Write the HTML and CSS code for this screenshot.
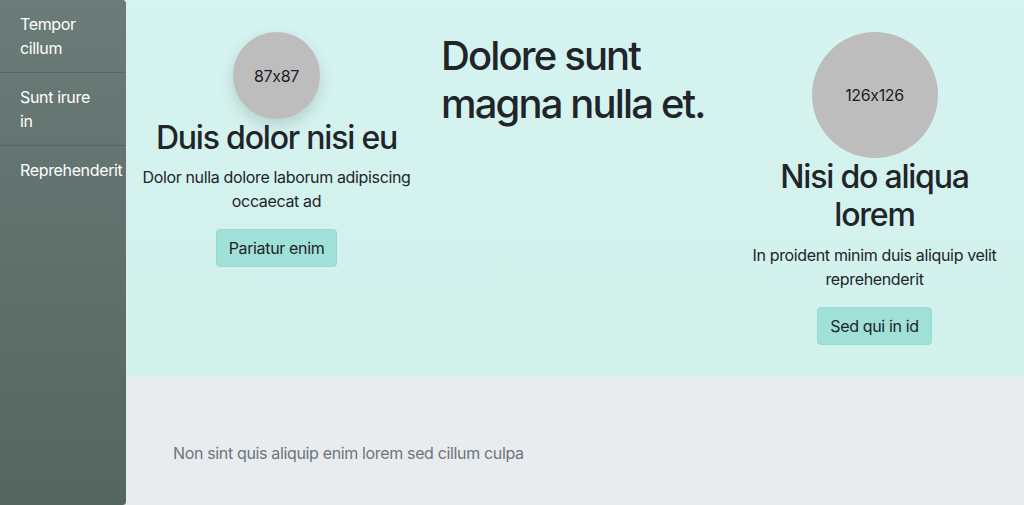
FILE: index.html
```html
<!DOCTYPE html>
<html lang="en">
<head>
<meta charset="utf-8">
<title>Page</title>
<link rel="stylesheet" href="styles.css">
</head>
<body>
<div class="layout">
  <nav class="sidebar">
    <a class="nav-item" href="#">Tempor cillum</a>
    <a class="nav-item" href="#">Sunt irure in</a>
    <a class="nav-item" href="#">Reprehenderit</a>
  </nav>
  <main class="main">
    <section class="hero">
      <div class="col col-center">
        <div class="avatar avatar-sm">87x87</div>
        <h2 class="title">Duis dolor nisi eu</h2>
        <p class="text">Dolor nulla dolore laborum adipiscing occaecat ad</p>
        <a class="btn" href="#">Pariatur enim</a>
      </div>
      <div class="col">
        <h1 class="display">Dolore sunt magna nulla et.</h1>
      </div>
      <div class="col col-center">
        <div class="avatar avatar-lg">126x126</div>
        <h2 class="title">Nisi do aliqua lorem</h2>
        <p class="text">In proident minim duis aliquip velit reprehenderit</p>
        <a class="btn" href="#">Sed qui in id</a>
      </div>
    </section>
    <footer class="footer">
      <p class="footer-text">Non sint quis aliquip enim lorem sed cillum culpa</p>
    </footer>
  </main>
</div>
</body>
</html>
```

FILE: styles.css
```css
* { box-sizing: border-box; }
html, body { margin: 0; padding: 0; }
body {
  font-family: Inter, "Noto Sans", "Liberation Sans", sans-serif;
  font-feature-settings: "calt" 0;
  font-size: 16px;
  line-height: 1.5;
  letter-spacing: -0.35px;
  color: #212529;
  background: #e9ecef;
}
.layout {
  display: flex;
  min-height: 505px;
  height: 505px;
  overflow: hidden;
}
.sidebar {
  width: 127px;
  flex: 0 0 127px;
  display: flex;
  flex-direction: column;
  background: linear-gradient(180deg, #6b7b78 0%, #55655f 100%);
  border-right: 1px solid #dfeeeb;
  border-radius: 0 4px 4px 0;
}
.nav-item {
  display: block;
  padding: 12px 20px;
  color: #ffffff;
  text-decoration: none;
  border-bottom: 1px solid rgba(0, 0, 0, 0.14);
}
.nav-item:last-child { border-bottom: none; }
.main {
  flex: 1;
  display: flex;
  flex-direction: column;
}
.hero {
  display: grid;
  grid-template-columns: 1fr 1fr 1fr;
  padding: 32px 0;
  background: linear-gradient(180deg, #d5f4f1 0%, #d2f1eb 100%);
}
.col {
  padding: 0 15px;
}
.col-center {
  display: flex;
  flex-direction: column;
  align-items: center;
  text-align: center;
}
.avatar {
  display: flex;
  align-items: center;
  justify-content: center;
  border-radius: 50%;
  background: #bdbdbd;
  color: #1d1d1d;
  font-size: 16px;
}
.avatar-sm {
  width: 87px;
  height: 87px;
  box-shadow: 0 6px 16px rgba(0, 0, 0, 0.15);
}
.avatar-lg {
  width: 126px;
  height: 126px;
}
.title {
  margin: 0 0 8px;
  font-size: 32px;
  font-weight: 500;
  line-height: 1.2;
  letter-spacing: -1.2px;
}
.display {
  margin: 0;
  font-size: 40px;
  font-weight: 500;
  line-height: 1.2;
  letter-spacing: -1.85px;
}
.text {
  margin: 0 0 16px;
}
.btn {
  display: inline-block;
  padding: 6px 12px;
  border: 1px solid #95dbd2;
  border-radius: 4px;
  background: #9fe0d7;
  color: #212529;
  text-decoration: none;
  line-height: 24px;
}
.footer {
  flex: 1;
  background: #e9ecef;
  padding: 64px 46px;
}
.footer-text {
  margin: 0;
  color: #6c757d;
}
```
